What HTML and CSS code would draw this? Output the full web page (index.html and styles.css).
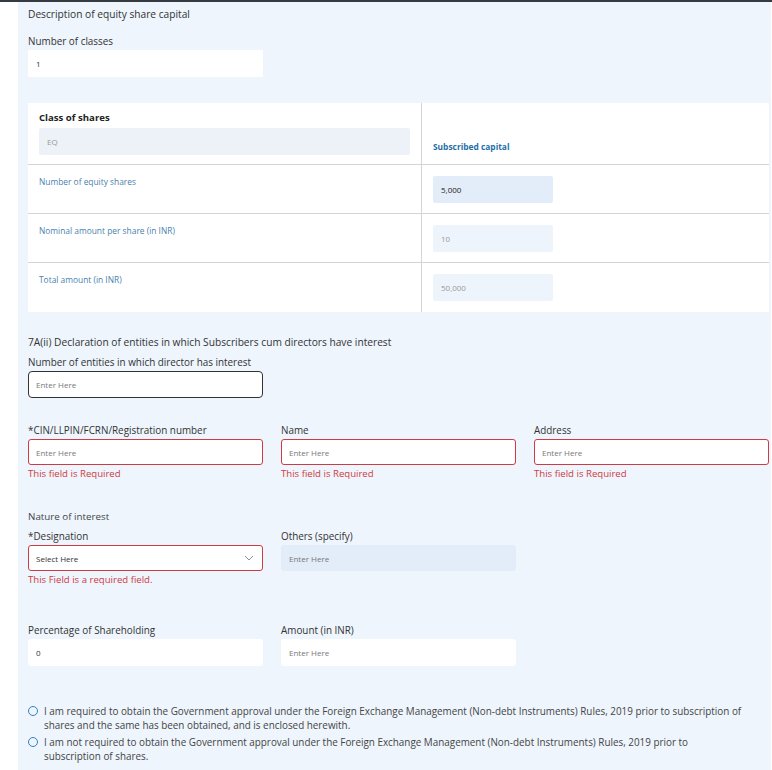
FILE: index.html
```html
<!DOCTYPE html>
<html lang="en">
  <head>
    <meta charset="UTF-8" />
    <meta name="viewport" content="width=device-width, initial-scale=1.0" />
    <title>Equity share capital</title>
    <link rel="stylesheet" href="styles.css">
  </head>
  <body>
    <div class="top-bar"></div>
    <div class="panel">
      <p class="section-title">Description of equity share capital</p>

      <div class="field field-first">
        <label class="field-label">Number of classes</label>
        <input type="text" class="form-control" value="1" />
      </div>

      <div class="share-table">
        <div class="cell cell-head">
          <div class="head-label">Class of shares</div>
          <input type="text" class="form-control muted-input" value="EQ" readonly />
        </div>
        <div class="cell cell-head cell-right">
          <div class="head-label head-blue">Subscribed capital</div>
        </div>

        <div class="cell"><div class="row-label">Number of equity shares</div></div>
        <div class="cell cell-right">
          <input type="text" class="form-control small-input filled" value="5,000" />
        </div>

        <div class="cell"><div class="row-label">Nominal amount per share (in INR)</div></div>
        <div class="cell cell-right">
          <input type="text" class="form-control small-input readonly" value="10" readonly />
        </div>

        <div class="cell cell-last"><div class="row-label">Total amount (in INR)</div></div>
        <div class="cell cell-right cell-last">
          <input type="text" class="form-control small-input readonly" value="50,000" readonly />
        </div>
      </div>

      <p class="section-title section-7a">7A(ii) Declaration of entities in which Subscribers cum directors have interest</p>

      <div class="field field-entities">
        <label class="field-label">Number of entities in which director has interest</label>
        <input type="text" class="form-control focused" placeholder="Enter Here" />
      </div>

      <div class="grid-row row-entity">
        <div class="field">
          <label class="field-label">*CIN/LLPIN/FCRN/Registration number</label>
          <input type="text" class="form-control invalid" placeholder="Enter Here" />
          <div class="error-text">This field is Required</div>
        </div>
        <div class="field">
          <label class="field-label">Name</label>
          <input type="text" class="form-control invalid" placeholder="Enter Here" />
          <div class="error-text">This field is Required</div>
        </div>
        <div class="field">
          <label class="field-label">Address</label>
          <input type="text" class="form-control invalid" placeholder="Enter Here" />
          <div class="error-text">This field is Required</div>
        </div>
      </div>

      <p class="sub-title">Nature of interest</p>

      <div class="grid-row row-designation">
        <div class="field">
          <label class="field-label">*Designation</label>
          <div class="select-box invalid">
            <span>Select Here</span>
            <svg width="10" height="6" viewBox="0 0 10 6">
              <polyline points="1,1 5,5 9,1" fill="none" stroke="#8a8f96" stroke-width="1" />
            </svg>
          </div>
          <div class="error-text">This Field is a required field.</div>
        </div>
        <div class="field">
          <label class="field-label">Others (specify)</label>
          <input type="text" class="form-control disabled" placeholder="Enter Here" disabled />
        </div>
      </div>

      <div class="grid-row row-holding">
        <div class="field">
          <label class="field-label">Percentage of Shareholding</label>
          <input type="text" class="form-control" value="0" />
        </div>
        <div class="field">
          <label class="field-label">Amount (in INR)</label>
          <input type="text" class="form-control" placeholder="Enter Here" />
        </div>
      </div>

      <div class="radio-list">
        <label class="radio-item">
          <span class="radio-dot"></span>
          <span>I am required to obtain the Government approval under the Foreign Exchange Management (Non-debt Instruments) Rules, 2019 prior to subscription of shares and the same has been obtained, and is enclosed herewith.</span>
        </label>
        <label class="radio-item">
          <span class="radio-dot"></span>
          <span>I am not required to obtain the Government approval under the Foreign Exchange Management (Non-debt Instruments) Rules, 2019 prior to subscription of shares.</span>
        </label>
      </div>
    </div>
  </body>
</html>
```

FILE: styles.css
```css
:root {
  --panel: #eef5fd;
  --text: #333;
  --muted: #8a8f96;
  --blue: #1f6fa8;
  --row-blue: #4a7fae;
  --error: #cf3b42;
  --line: #d4d4d4;
}

* {
  box-sizing: border-box;
  margin: 0;
  padding: 0;
  font-family: "Open Sans", Lato, sans-serif;
}

body {
  background: #fff;
  color: var(--text);
  height: 770px;
  overflow: hidden;
}

.top-bar {
  height: 2px;
  background: #353b40;
}

.panel {
  background: var(--panel);
  margin-left: 18px;
  margin-right: 1px;
  padding: 6px 2px 0 10px;
  height: 768px;
}

.section-title {
  font-size: 10.2px;
  line-height: 12px;
  color: #333;
}

.sub-title {
  font-size: 9.8px;
  line-height: 12px;
  color: #444;
  margin-top: 31px;
}

.field {
  display: flex;
  flex-direction: column;
}

.field-label {
  font-size: 9.9px;
  line-height: 12px;
  color: #333;
  margin-bottom: 3px;
}

.field-first {
  margin-top: 15px;
  width: 235px;
}

.form-control {
  width: 100%;
  height: 27px;
  padding: 0 7px;
  border: 1px solid transparent;
  border-radius: 3px;
  background: #fff;
  font-size: 8px;
  color: #333;
  outline: none;
}

.form-control::placeholder {
  color: #777;
}

.field-first .form-control {
  border-radius: 0;
}

.share-table {
  margin-top: 26px;
  background: #fff;
  display: grid;
  grid-template-columns: 393px 1fr;
}

.cell {
  height: 49px;
  border-bottom: 1px solid var(--line);
  padding: 11px 11px 0;
}

.cell-right {
  border-left: 1px solid var(--line);
}

.cell-head {
  height: 62px;
  padding-top: 8px;
}

.cell-head.cell-right {
  display: flex;
  align-items: flex-end;
  padding-bottom: 11px;
}

.cell-last {
  border-bottom: none;
}

.head-label {
  font-size: 9.6px;
  font-weight: bold;
  line-height: 13px;
  color: #222;
  margin-bottom: 4px;
}

.head-blue {
  font-size: 8.4px;
  color: var(--blue);
  margin-bottom: 0;
}

.muted-input {
  background: #edf2f8;
  color: #999;
  border-radius: 2px;
}

.row-label {
  font-size: 8.4px;
  line-height: 12px;
  color: var(--row-blue);
}

.small-input {
  width: 120px;
  border-radius: 2px;
}

.filled {
  background: #e3edf9;
  color: #222;
}

.readonly {
  background: #eef4fb;
  color: #999;
}

.section-7a {
  margin-top: 24px;
}

.field-entities {
  margin-top: 8px;
  width: 235px;
}

.focused {
  border-color: #333;
  border-radius: 4px;
}

.grid-row {
  display: grid;
  grid-template-columns: repeat(3, 1fr);
  column-gap: 18px;
}

.row-entity {
  margin-top: 26px;
}

.row-entity .form-control {
  height: 26px;
}

.invalid {
  border: 1px solid var(--error);
}

.error-text {
  font-size: 9.6px;
  line-height: 12px;
  color: var(--error);
  margin-top: 3px;
}

.row-designation {
  margin-top: 7px;
}

.select-box {
  height: 26px;
  background: #fff;
  border-radius: 3px;
  padding: 0 7px;
  display: flex;
  align-items: center;
  justify-content: space-between;
  font-size: 8px;
  color: #333;
}

.select-box svg {
  margin-right: 1px;
}

.disabled {
  height: 26px;
  background: #e3edf9;
}

.row-holding {
  margin-top: 38px;
}

.radio-list {
  margin-top: 38px;
  display: flex;
  flex-direction: column;
  gap: 3px;
}

.radio-item {
  display: flex;
  align-items: flex-start;
  font-size: 9.9px;
  line-height: 14px;
  color: #444;
  padding-right: 22px;
}

.radio-dot {
  flex: none;
  width: 10px;
  height: 10px;
  border: 1.3px solid #2f80c9;
  border-radius: 50%;
  margin: 2px 6px 0 0;
}
```
